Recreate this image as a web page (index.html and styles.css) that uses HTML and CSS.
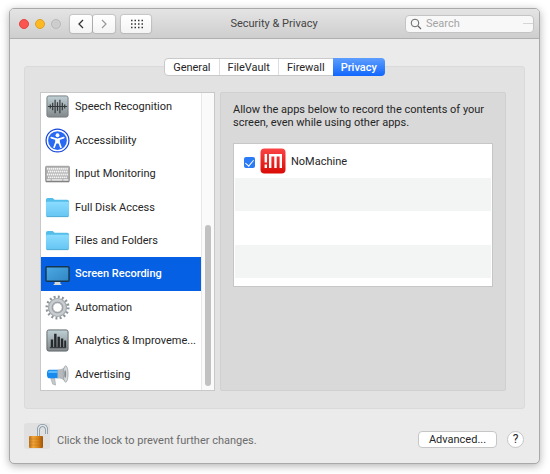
FILE: index.html
```html
<!DOCTYPE html>
<html lang="en">
<head>
  <meta charset="UTF-8">
  <meta name="viewport" content="width=device-width, initial-scale=1.0">
  <title>Security &amp; Privacy</title>
  <link rel="stylesheet" href="styles.css">
</head>
<body>
  <div class="window">
    <header class="titlebar">
      <div class="lights">
        <button class="light close" aria-label="Close"></button>
        <button class="light minimize" aria-label="Minimize"></button>
        <button class="light zoom" aria-label="Zoom" disabled></button>
      </div>
      <div class="nav">
        <button class="tool" aria-label="Back">
          <svg width="8" height="12" viewBox="0 0 8 12"><path d="M6 2 2 6l4 4" fill="none" stroke="#333" stroke-width="1.3"/></svg>
        </button>
        <button class="tool" aria-label="Forward">
          <svg width="8" height="12" viewBox="0 0 8 12"><path d="m2 2 4 4-4 4" fill="none" stroke="#999" stroke-width="1.2"/></svg>
        </button>
      </div>
      <button class="tool grid-button" aria-label="Show all">
        <svg width="13" height="10" viewBox="0 0 13 10"><path d="M1 1.5h12M1 5h12M1 8.500h12" stroke="#333" stroke-width="1.500" stroke-dasharray="1.500 2"/></svg>
      </button>
      <h1>Security &amp; Privacy</h1>
      <label class="search">
        <svg width="12" height="12" viewBox="0 0 12 12"><circle cx="5" cy="5" r="3.800" fill="none" stroke="#666"/><path d="m8 8 3 3" stroke="#666" stroke-width="1.200"/></svg>
        <input type="text" placeholder="Search" aria-label="Search">
        <span class="dash"></span>
      </label>
    </header>

    <main>
      <nav class="tabs">
        <button>General</button>
        <button>FileVault</button>
        <button>Firewall</button>
        <button class="active">Privacy</button>
      </nav>

      <div class="panel">
        <div class="sidebar">
          <ul>
            <li>
              <svg class="icon" viewBox="0 0 26 26">
                <defs><linearGradient id="steel" x2="0" y2="1"><stop stop-color="#bfd0d6"/><stop offset="1" stop-color="#82888a"/></linearGradient></defs>
                <rect x="2" y="2" width="22" height="22" rx="2" fill="url(#steel)" stroke="#777d80"/>
                <path d="M3 13h20M5.500 11v4M8 9v8M10.500 6v14M13 8.500v9M15.500 6v14M18 9v8M20.500 11v4" stroke="#34383a" stroke-width="1.200"/>
              </svg>
              <span>Speech Recognition</span>
            </li>
            <li>
              <svg class="icon" viewBox="0 0 26 26">
                <circle cx="13" cy="13" r="12.500" fill="#1646d8"/>
                <circle cx="13" cy="13" r="10.500" fill="#2969f3" stroke="#fff" stroke-width="1.500"/>
                <circle cx="13" cy="7.500" r="2" fill="#fff"/>
                <path d="m6.500 10 5 1.500v3L9.500 20M19.500 10l-5 1.500v3l2 5.500" fill="none" stroke="#fff" stroke-width="1.800" stroke-linecap="round"/>
                <path d="M11 11h4l-.500 5h-3z" fill="#fff"/>
              </svg>
              <span>Accessibility</span>
            </li>
            <li>
              <svg class="icon" viewBox="0 0 26 26">
                <rect x=".500" y="5.500" width="25" height="16" rx="1" fill="#aaa" stroke="#a0a0a0"/>
                <path d="M1 21.500h24" stroke="#777"/>
                <path d="M2 8h22M3 11h21M2 14h22M3 17h20" stroke="#f5f5f5" stroke-width="2" stroke-dasharray="1.600 .500"/>
                <path d="M2 19.500h4M7 19.500h11M19 19.500h5" stroke="#f5f5f5" stroke-width="1.300"/>
              </svg>
              <span>Input Monitoring</span>
            </li>
            <li>
              <svg class="icon" viewBox="0 0 26 26">
                <defs><linearGradient id="folder" x2="0" y2="1"><stop stop-color="#8bdcff"/><stop offset="1" stop-color="#64c4f2"/></linearGradient></defs>
                <path d="M1 5q0-2 2-2h5l2 2h13q2 0 2 2v4H1z" fill="#55bdea"/>
                <rect x="1" y="7" width="24" height="16" rx="1.500" fill="url(#folder)"/>
                <path d="M2 22.500h22" stroke="#51abd3"/>
              </svg>
              <span>Full Disk Access</span>
            </li>
            <li>
              <svg class="icon" viewBox="0 0 26 26">
                <path d="M1 5q0-2 2-2h5l2 2h13q2 0 2 2v4H1z" fill="#55bdea"/>
                <rect x="1" y="7" width="24" height="16" rx="1.500" fill="url(#folder)"/>
                <path d="M2 22.500h22" stroke="#51abd3"/>
              </svg>
              <span>Files and Folders</span>
            </li>
            <li class="selected">
              <svg class="icon" viewBox="0 0 26 26">
                <defs><linearGradient id="screen" x2="1" y2="1"><stop stop-color="#4eaae4"/><stop offset="1" stop-color="#2f85c2"/></linearGradient></defs>
                <path d="M10 21h6v3h1v1H9v-1h1z" fill="#d3d8da"/>
                <rect x="1" y="6" width="24" height="15" rx="1" fill="url(#screen)" stroke="#17364e" stroke-width="1.500"/>
              </svg>
              <span>Screen Recording</span>
            </li>
            <li>
              <svg class="icon" viewBox="0 0 26 26">
                <circle cx="13" cy="13" r="11" fill="none" stroke="#8c9499" stroke-width="3" stroke-dasharray="2 2.320"/>
                <circle cx="13" cy="13" r="7.500" fill="none" stroke="#a3a9ac" stroke-width="5"/>
                <circle cx="13" cy="13" r="7.500" fill="none" stroke="#c9cdcf" stroke-width="2.500"/>
                <circle cx="13" cy="13" r="5" fill="#fff" stroke="#8a9196"/>
              </svg>
              <span>Automation</span>
            </li>
            <li>
              <svg class="icon" viewBox="0 0 26 26">
                <rect x="2" y="2" width="22" height="22" rx="2" fill="url(#steel)" stroke="#60676a"/>
                <path d="M6 20v-8h2.500v8zM9.500 20V6H12v14zM13 20V9h2.500v11zM16.500 20v-9H19v9zM20 20v-7h2v7z" fill="#26292b"/>
                <path d="M5 20.500h17" stroke="#26292b"/>
              </svg>
              <span>Analytics &amp; Improveme...</span>
            </li>
            <li>
              <svg class="icon" viewBox="0 0 26 26">
                <path d="m6 17 2 6 3 1-1-7z" fill="#c5c9cc" stroke="#969da1" stroke-width=".600"/>
                <path d="M4 8h10v9H4q-2-.500-2-4.500T4 8z" fill="#168bed"/>
                <path d="M4 9h9v2.500H3z" fill="#59baff"/>
                <path d="M13 8q5 0 9-4v17q-4-4-9-4z" fill="#b6babd"/>
                <ellipse cx="21.500" cy="12.500" rx="2.500" ry="8.500" fill="#d7dadc" stroke="#8f9599" stroke-width=".700"/>
                <ellipse cx="21" cy="12.500" rx="1" ry="4" fill="#858b90"/>
              </svg>
              <span>Advertising</span>
            </li>
          </ul>
          <div class="scrollbar"><div class="thumb"></div></div>
        </div>

        <section class="detail">
          <p>Allow the apps below to record the contents of your screen, even while using other apps.</p>
          <div class="apps">
            <label class="app">
              <input type="checkbox" checked>
              <svg width="26" height="26" viewBox="0 0 26 26">
                <defs><linearGradient id="red" x2="0" y2="1"><stop stop-color="#fa4444"/><stop offset="1" stop-color="#d90b06"/></linearGradient></defs>
                <rect x=".500" y=".500" width="25" height="25" rx="4" fill="url(#red)"/>
                <path d="M5.800 6v8.500M5.800 16.500V20M10.200 20V7.300h10.600V20M15.500 7.300V20" fill="none" stroke="#fff" stroke-width="2.400"/>
              </svg>
              <span>NoMachine</span>
            </label>
            <div class="app"></div>
            <div class="app"></div>
            <div class="app"></div>
          </div>
        </section>
      </div>
    </main>

    <footer>
      <button class="lock" aria-label="Lock">
        <svg width="26" height="26" viewBox="0 0 26 26">
          <defs><linearGradient id="gold"><stop stop-color="#b96d16"/><stop offset=".300" stop-color="#f0a63b"/><stop offset=".650" stop-color="#d98319"/><stop offset="1" stop-color="#9c5509"/></linearGradient></defs>
          <path d="M14.500 13V7q0-4.500 4-4.500t4 4.500v4" fill="none" stroke="#7e8d98" stroke-width="3"/>
          <path d="M14.500 13V7q0-4.500 4-4.500t4 4.500v4" fill="none" stroke="#dce5ea" stroke-width="1.500"/>
          <rect x="5" y="13" width="14" height="12" rx="1" fill="url(#gold)"/>
          <path d="M5 16h14M5 19h14M5 22h14" stroke="#a9600f" stroke-width=".300"/>
        </svg>
      </button>
      <span class="hint">Click the lock to prevent further changes.</span>
      <button class="advanced">Advanced...</button>
      <button class="help" aria-label="Help">?</button>
    </footer>
  </div>
</body>
</html>
```
FILE: styles.css
```css
* {
  box-sizing: border-box;
}

body {
  margin: 0;
  padding: 8px 10px 9px 9px;
  background: #fff;
  color: #262626;
  font-family: Roboto, "Liberation Sans", sans-serif;
  font-size: 11px;
  line-height: 13px;
}

button, input {
  font: inherit;
  color: inherit;
}

button {
  padding: 0;
  border: none;
}

svg {
  display: block;
  flex-shrink: 0;
}

.window {
  background: #ebebeb;
  border: 1px solid #a9a9a9;
  border-radius: 5px;
  box-shadow: 0 2px 9px rgba(0, 0, 0, 0.3);
}

.titlebar {
  display: flex;
  align-items: center;
  height: 30px;
  padding: 0 5px 0 9px;
  background: linear-gradient(#e4e4e4, #cecece);
  border-bottom: 1px solid #b0b0b0;
  border-radius: 4px 4px 0 0;
}

.lights {
  display: flex;
  gap: 6px;
}

.light {
  width: 10px;
  height: 10px;
  border-radius: 50%;
}

.close {
  background: #fc5550;
  border: 1px solid #e2443f;
}

.minimize {
  background: #fdb924;
  border: 1px solid #dfa023;
}

.zoom {
  background: #cdcdcd;
  border: 1px solid #b9b9b9;
}

.nav {
  display: flex;
  gap: 1px;
  margin: 0 6px 0 9px;
}

.tool {
  display: flex;
  align-items: center;
  justify-content: center;
  width: 22px;
  height: 18px;
  background: linear-gradient(#fff, #f4f4f4);
  border-radius: 3px;
  box-shadow: 0 0 1px 1px rgba(0, 0, 0, 0.12);
}

.grid-button {
  width: 30px;
}

h1 {
  flex: 1;
  margin: 0;
  padding-right: 8px;
  color: #444;
  font-size: 11px;
  font-weight: 400;
  text-align: center;
}

.search {
  display: flex;
  align-items: center;
  gap: 4px;
  width: 129px;
  height: 18px;
  padding-left: 4px;
  background: #f8f8f8;
  border: 1px solid #c4c4c4;
  border-radius: 4px;
}

.search input {
  flex: 1;
  min-width: 0;
  padding: 0;
  border: none;
  outline: none;
  background: none;
}

.search input::placeholder {
  color: #a4a4a4;
}

.dash {
  width: 10px;
  height: 1px;
  background: #d5d5d5;
}

main {
  padding: 19px 14px 0;
}

.tabs {
  display: flex;
  position: relative;
  width: max-content;
  margin: 0 auto -10px;
  background: #fff;
  border: 1px solid #c9c9c9;
  border-radius: 4px;
}

.tabs button {
  height: 16px;
  padding: 0 8px;
  background: none;
  border-right: 1px solid #ddd;
}

.tabs .active {
  margin: -1px;
  height: 18px;
  background: linear-gradient(#5d9eff, #1166fc);
  border: none;
  border-radius: 0 4px 4px 0;
  color: #fff;
  font-weight: 500;
}

.panel {
  display: flex;
  gap: 5px;
  padding: 25px 18px 17px 15px;
  background: #e2e2e2;
  border: 1px solid #dadada;
  border-radius: 3px;
}

.sidebar {
  display: flex;
  width: 175px;
  height: 299px;
  overflow: hidden;
  background: #fff;
  border: 1px solid #c8c8c8;
}

ul {
  display: flex;
  flex-direction: column;
  flex: 1;
  min-width: 0;
  margin: -3px 0 -1px;
  padding: 0;
  list-style: none;
}

li {
  display: flex;
  flex: 1;
  align-items: center;
  gap: 5px;
  padding: 0 6px 0 4px;
}

li span {
  white-space: nowrap;
}

.icon {
  width: 25px;
  height: 25px;
}

.selected {
  background: #0560e3;
  color: #fff;
  font-weight: 500;
}

.scrollbar {
  display: flex;
  align-items: flex-end;
  justify-content: center;
  width: 13px;
  padding-bottom: 4px;
  background: #fafafa;
  border-left: 1px solid #e8e8e8;
}

.thumb {
  width: 6px;
  height: 55%;
  background: #c1c1c1;
  border-radius: 3px;
}

.detail {
  flex: 1;
  padding: 10px 12px;
  background: #d9d9d9;
  border: 1px solid #d0d0d0;
  border-radius: 2px;
}

.detail p {
  margin: 0 0 14px;
}

.apps {
  padding: 0 1px 8px;
  background: #fff;
  border: 1px solid #c6c6c6;
}

.app {
  display: flex;
  align-items: center;
  height: 34px;
  padding-left: 9px;
}

.app:nth-child(even) {
  height: 33px;
  background: #f3f5f5;
}

.app input {
  display: flex;
  justify-content: center;
  appearance: none;
  width: 11px;
  height: 11px;
  margin: 2px 5px 0 0;
  background: #2b7bf6;
  border-radius: 2px;
}

.app input:checked::before {
  content: "";
  width: 4px;
  height: 7px;
  margin-top: 1px;
  border: solid #fff;
  border-width: 0 1px 1px 0;
  transform: rotate(40deg);
}

.app span {
  margin-left: 5px;
}

footer {
  display: flex;
  align-items: center;
  padding: 14px 15px 14px 14px;
}

.lock {
  background: #e0e0e0;
  border-radius: 3px;
}

.hint {
  flex: 1;
  padding: 9px 0 0 7px;
  color: #6c6c6c;
}

.advanced {
  width: 79px;
  height: 17px;
  margin: 6px 10px 0 0;
  background: #fff;
  border: 1px solid #c6c6c6;
  border-radius: 4px;
}

.help {
  width: 17px;
  height: 17px;
  margin-top: 6px;
  background: #fff;
  border: 1px solid #c6c6c6;
  border-radius: 50%;
  font-size: 12px;
}
```
